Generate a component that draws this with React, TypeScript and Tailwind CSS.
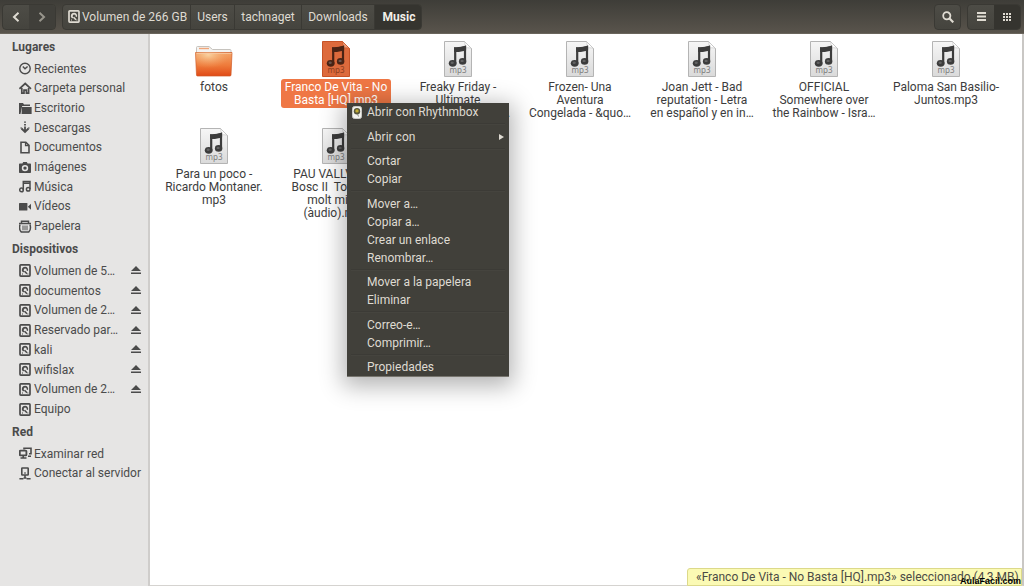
import { useState } from 'react'
import type { ReactNode } from 'react'
import clsx from 'clsx'

type IconName =
  | 'clock'
  | 'home'
  | 'folder'
  | 'download'
  | 'document'
  | 'camera'
  | 'music'
  | 'video'
  | 'trash'
  | 'disk'
  | 'network'
  | 'server'

interface Place {
  label: string
  icon: IconName
  eject?: boolean
}

interface FileItem {
  lines: string[]
  kind: 'folder' | 'mp3'
}

const glyphs: Record<IconName, ReactNode> = {
  clock: (
    <>
      <circle cx="6" cy="6.5" r="5.2" />
      <path d="M3.8 4.6 6 6.8l2.6-2.4" />
    </>
  ),
  home: (
    <>
      <path d="M.4 6.8 6.2 1.5l5.8 5.3" strokeWidth="1.7" />
      <path d="M2.8 6v5.2h2.2V8.2h2.4v3h2.2V6" strokeWidth="1.7" />
    </>
  ),
  folder: (
    <g fill="currentColor" stroke="none">
      <path d="M0 1h4l1 1.5h6V4H3.2L1.5 12H0z" />
      <path d="M3 5h9.6v7H2.6z" />
    </g>
  ),
  download: (
    <>
      <path d="M6 .4v1.400M6 3v1.400M6 5.500V11M2.500 7.500 6 11l3.500-3.500" strokeWidth="1.8" />
      <path d="M1.400 7h1.600M9 7h1.600" strokeWidth="1.2" />
    </>
  ),
  document: (
    <>
      <path d="M2 1.2h4.8L10 4.4v7.4H2z" strokeWidth="1.6" />
      <path d="M6.6 1v3.6H10" />
    </>
  ),
  camera: (
    <path
      fill="currentColor"
      stroke="none"
      fillRule="evenodd"
      d="M3.4 2.6 4.2 1h3.6l.8 1.6H11c.6 0 1 .4 1 1V11c0 .6-.4 1-1 1H1c-.6 0-1-.4-1-1V3.6c0-.6.4-1 1-1zM6 3.9a3.2 3.2 0 1 0 0 6.4 3.2 3.2 0 0 0 0-6.4zM6 5.4a1.7 1.7 0 1 1 0 3.4 1.7 1.7 0 0 1 0-3.4z"
    />
  ),
  music: (
    <>
      <path d="M4.3 10V1.5h6.7V9M4.3 3.2h6.7" strokeWidth="1.5" />
      <circle cx="2.5" cy="9.9" r="1.8" strokeWidth="1.5" />
      <circle cx="9.2" cy="9.2" r="1.8" strokeWidth="1.5" />
    </>
  ),
  video: (
    <g fill="currentColor" stroke="none">
      <rect x="0" y="3" width="8.4" height="7.5" rx=".6" />
      <path d="M8.8 6.7 12 3.7v6z" />
    </g>
  ),
  trash: (
    <>
      <path d="M0 3.4h12M2.5 3V1.2h7V3" strokeWidth="1.5" />
      <path d="M1 4.5c-.8 3-.3 6 1.200 7.400h7.600c1.500-1.400 2-4.400 1.200-7.400" strokeWidth="1.5" />
      <path d="M4 5.500v4.800M6 5.500v4.800M8 5.500v4.800" strokeWidth="1" />
    </>
  ),
  disk: (
    <>
      <rect x="1" y=".9" width="10" height="11.2" rx=".8" strokeWidth="1.7" />
      <path
        fill="currentColor"
        stroke="none"
        d="M6 2.7a3.2 3.2 0 0 1 3 4.2L7.6 6.6a1.5 1.5 0 1 0-2 .8L4 8.4A3.2 3.2 0 0 1 6 2.7z"
      />
      <path d="M5.5 7.2 8 9.8" strokeWidth="1.5" />
      <path d="M8.4 10h1M3 10h1" strokeWidth="1" />
    </>
  ),
  network: (
    <>
      <path d="M5 2.6V1.3h7v5.4h-2" strokeWidth="1.6" />
      <rect x=".8" y="3.6" width="6.6" height="4.8" rx=".6" strokeWidth="1.8" />
      <path d="M1.5 11h6M4.2 8.5V11M9 9.2h3" strokeWidth="1.6" />
    </>
  ),
  server: (
    <>
      <rect x="2.8" y="1" width="6.4" height="7" rx=".5" strokeWidth="1.6" />
      <path d="M6 8v3.5M.4 11.7h4M7.6 11.7h4M4.6 11h2.8" strokeWidth="1.6" />
      <path d="M5.3 6h1.4" />
    </>
  ),
}

function Glyph({ name }: { name: IconName }) {
  return (
    <svg
      viewBox="0 0 13 13"
      className="size-[13px] shrink-0"
      fill="none"
      stroke="currentColor"
      strokeWidth="1.4"
      aria-hidden="true"
    >
      {glyphs[name]}
    </svg>
  )
}

function EjectIcon() {
  return (
    <svg viewBox="0 0 10 9" className="h-[9px] w-[10px]" fill="currentColor" aria-hidden="true">
      <path d="M5 0l5 5H0zM0 6.5h10V8H0z" />
    </svg>
  )
}

function FolderIcon() {
  return (
    <svg viewBox="0 0 38 32" className="h-8 w-[38px]" aria-hidden="true">
      <defs>
        <linearGradient id="folderFront" x1="0" y1="0" x2="0" y2="1">
          <stop offset="0" stopColor="#f3a468" />
          <stop offset=".55" stopColor="#ee7a3a" />
          <stop offset="1" stopColor="#e04a17" />
        </linearGradient>
        <radialGradient id="folderShine" cx=".35" cy=".1" r=".6">
          <stop offset="0" stopColor="#fbe0b0" stopOpacity=".8" />
          <stop offset="1" stopColor="#f3a468" stopOpacity="0" />
        </radialGradient>
      </defs>
      <path d="M1.5 10V2.5c0-.6.4-1 1-1H14l3.5 3H35c.6 0 1 .4 1 1V10z" fill="#f4f3f1" stroke="#c6c3be" />
      <path d="M4 3.5h10" stroke="#f0a57a" strokeWidth="1.4" />
      <path d="M.5 7.5h36.5L36 30c0 .6-.4 1-1 1H2.5c-.6 0-1-.4-1-1z" fill="url(#folderFront)" stroke="#cf5a26" strokeOpacity=".7" />
      <path d="M.5 7.5h36.5L36 30H2z" fill="url(#folderShine)" />
      <path d="M1.5 8.5h35" stroke="#f8c9a2" strokeWidth=".8" />
    </svg>
  )
}

function Mp3Icon({ selected }: { selected: boolean }) {
  const ink = selected ? '#4a2314' : '#3c3c3c'
  return (
    <svg viewBox="0 0 28 36" className="h-9 w-7" aria-hidden="true">
      <defs>
        <linearGradient id="sheet" x1="0" y1="0" x2="0" y2="1">
          <stop offset="0" stopColor="#f6f6f6" />
          <stop offset="1" stopColor="#dadada" />
        </linearGradient>
      </defs>
      <path
        d="M.5.5h20l7 7v28H.5z"
        fill={selected ? '#dd6a3c' : 'url(#sheet)'}
        stroke={selected ? '#c65327' : '#b4b4b4'}
      />
      <path
        d="M20.5.5c1 3 .5 5-.5 7 2.5-1 5-1 7.5 0z"
        fill={selected ? '#f0a07c' : '#ffffff'}
        stroke={selected ? '#c65327' : '#bdbdbd'}
        strokeWidth=".6"
      />
      <path d="M11.2 22V7.5c4 .3 6.5-.3 9.8-1.5v14.5" fill="none" stroke={ink} strokeWidth="2.2" />
      <path d="M10.1 6.2c4 .4 8-.2 12-1.6v4.6c-4 1.5-8 2.1-12 1.7z" fill={ink} />
      <ellipse cx="8.7" cy="22.3" rx="3.9" ry="3.4" fill={ink} />
      <ellipse cx="18.6" cy="20.4" rx="3.7" ry="3.3" fill={ink} />
      <ellipse cx="8.2" cy="21.8" rx="1.6" ry="1.2" fill="#8a8a8a" fillOpacity=".5" />
      <ellipse cx="18.1" cy="19.9" rx="1.6" ry="1.2" fill="#8a8a8a" fillOpacity=".5" />
      <text
        x="14"
        y="32"
        textAnchor="middle"
        fontSize="8"
        fill={selected ? '#8c3d1e' : '#7c7c7c'}
        className="font-['Noto_Sans',sans-serif]"
      >
        mp3
      </text>
    </svg>
  )
}

function PlayerIcon() {
  return (
    <svg viewBox="0 0 10 13" className="h-[13px] w-[10px]" aria-hidden="true">
      <rect x=".5" y=".5" width="9" height="12" rx="2" fill="#f2f2ee" stroke="#c9c9c4" />
      <circle cx="5" cy="5.3" r="3.2" fill="#57563a" />
      <circle cx="5" cy="4.9" r="1.7" fill="#c2ac34" />
      <path d="M5.5 8l1 2.5" stroke="#8a8a80" />
    </svg>
  )
}

const sections: { title: string; places: Place[]; height: string }[] = [
  {
    title: 'Lugares',
    height: 'h-[177px]',
    places: [
      { label: 'Recientes', icon: 'clock' },
      { label: 'Carpeta personal', icon: 'home' },
      { label: 'Escritorio', icon: 'folder' },
      { label: 'Descargas', icon: 'download' },
      { label: 'Documentos', icon: 'document' },
      { label: 'Imágenes', icon: 'camera' },
      { label: 'Música', icon: 'music' },
      { label: 'Vídeos', icon: 'video' },
      { label: 'Papelera', icon: 'trash' },
    ],
  },
  {
    title: 'Dispositivos',
    height: 'h-[158px]',
    places: [
      { label: 'Volumen de 5…', icon: 'disk', eject: true },
      { label: 'documentos', icon: 'disk', eject: true },
      { label: 'Volumen de 2…', icon: 'disk', eject: true },
      { label: 'Reservado par…', icon: 'disk', eject: true },
      { label: 'kali', icon: 'disk', eject: true },
      { label: 'wifislax', icon: 'disk', eject: true },
      { label: 'Volumen de 2…', icon: 'disk', eject: true },
      { label: 'Equipo', icon: 'disk' },
    ],
  },
  {
    title: 'Red',
    height: 'h-[39px]',
    places: [
      { label: 'Examinar red', icon: 'network' },
      { label: 'Conectar al servidor', icon: 'server' },
    ],
  },
]

const files: FileItem[] = [
  { kind: 'folder', lines: ['fotos'] },
  { kind: 'mp3', lines: ['Franco De Vita - No', 'Basta [HQ].mp3'] },
  { kind: 'mp3', lines: ['Freaky Friday -', 'Ultimate', 'Freaky Friday Mov…'] },
  { kind: 'mp3', lines: ['Frozen- Una', 'Aventura', 'Congelada - &quo…'] },
  { kind: 'mp3', lines: ['Joan Jett - Bad', 'reputation - Letra', 'en español y en in…'] },
  { kind: 'mp3', lines: ['OFFICIAL', 'Somewhere over', 'the Rainbow - Isra…'] },
  { kind: 'mp3', lines: ['Paloma San Basilio-', 'Juntos.mp3'] },
  { kind: 'mp3', lines: ['Para un poco -', 'Ricardo Montaner.', 'mp3'] },
  { kind: 'mp3', lines: ['PAU VALLVÉ - El', 'Bosc II  Tot anirà', 'molt millor', '(àudio).mp3'] },
  { kind: 'mp3', lines: ['Ricardo', 'Montaner - 03.mp3'] },
]

const menuGroups = [
  ['Abrir con Rhythmbox'],
  ['Abrir con'],
  ['Cortar', 'Copiar'],
  ['Mover a…', 'Copiar a…', 'Crear un enlace', 'Renombrar…'],
  ['Mover a la papelera', 'Eliminar'],
  ['Correo-e…', 'Comprimir…'],
  ['Propiedades'],
]

const groupBox =
  'flex h-[26px] overflow-hidden rounded border border-[#3a3934] bg-linear-to-b from-[#4d4c46] to-[#45443e] text-[#dfdbd2]'

function HeaderBar() {
  return (
    <header className="flex h-[34px] shrink-0 items-center border-b border-[#6a655c] bg-linear-to-b from-[#3e3d38] to-[#59544c] pr-[3px] pl-[2px]">
      <div className={clsx(groupBox, 'w-[54px]')}>
        <button aria-label="Atrás" className="flex flex-1 items-center justify-center">
          <svg viewBox="0 0 8 10" className="h-[10px] w-2" fill="none" stroke="currentColor" strokeWidth="2">
            <path d="M6.5.8 2 5l4.5 4.2" />
          </svg>
        </button>
        <button
          aria-label="Adelante"
          className="flex flex-1 items-center justify-center bg-[#403f3a] text-[#98958c]"
        >
          <svg viewBox="0 0 8 10" className="h-[10px] w-2" fill="none" stroke="currentColor" strokeWidth="2">
            <path d="M1.5.8 6 5 1.5 9.2" />
          </svg>
        </button>
      </div>

      <nav className={clsx(groupBox, 'ml-[6px] divide-x divide-[#3a3934]')}>
        <button className="flex w-[128px] items-center gap-px pl-[5px] whitespace-nowrap">
          <Glyph name="disk" />
          Volumen de 266 GB
        </button>
        <button className="w-11">Users</button>
        <button className="w-[67px]">tachnaget</button>
        <button className="w-[73px]">Downloads</button>
        <button className="w-[46px] bg-[#35342f] pl-[2px] font-bold text-[#f2efe8]">Music</button>
      </nav>

      <button aria-label="Buscar" className={clsx(groupBox, 'ml-auto w-[27px] items-center justify-center')}>
        <svg viewBox="0 0 12 12" className="size-3" fill="none" stroke="currentColor">
          <circle cx="4.8" cy="4.8" r="3.6" strokeWidth="1.8" />
          <path d="m7.3 7.3 4 4" strokeWidth="2.2" />
        </svg>
      </button>
      <div className={clsx(groupBox, 'ml-[6px] w-[54px]')}>
        <button aria-label="Ver como lista" className="flex flex-1 items-center justify-center">
          <svg viewBox="0 0 9 9" className="size-[9px]" stroke="currentColor" strokeWidth="2">
            <path d="M0 1h9M0 4.5h9M0 8h9" />
          </svg>
        </button>
        <button
          aria-label="Ver como iconos"
          className="flex flex-1 items-center justify-center bg-[#35342f]"
        >
          <svg viewBox="0 0 8 8" className="size-2" fill="currentColor">
            {[0, 3, 6].map((y) => [0, 3, 6].map((x) => <rect key={`${x}-${y}`} x={x} y={y} width="2" height="2" />))}
          </svg>
        </button>
      </div>
    </header>
  )
}

function Sidebar() {
  return (
    <aside className="w-[150px] shrink-0 border-r-2 border-[#cfcdcb] bg-[#e6e5e4] text-[#4b4b4b]">
      {sections.map((section) => (
        <section key={section.title}>
          <h2 className="flex h-[25px] items-center pl-3 font-bold">{section.title}</h2>
          <ul className={clsx('grid auto-rows-fr', section.height)}>
            {section.places.map((place, i) => (
              <li key={i} className="flex min-h-0 items-center pr-[7px] pl-[19px]">
                <a href="#" className="flex items-center gap-[2px] whitespace-nowrap">
                  <Glyph name={place.icon} />
                  {place.label}
                </a>
                {place.eject && (
                  <button aria-label={`Expulsar ${place.label}`} className="ml-auto">
                    <EjectIcon />
                  </button>
                )}
              </li>
            ))}
          </ul>
        </section>
      ))}
    </aside>
  )
}

function ContextMenu() {
  return (
    <div
      role="menu"
      className="absolute top-[103px] left-[347px] flex h-[274px] w-[162px] flex-col justify-between border-b border-[#77756e] bg-[#41403a] text-[#dfdbd2] shadow-[0_5px_22px_4px_rgba(0,0,0,0.3)]"
    >
      {menuGroups.map((group, i) => [
        i > 0 && <hr key={`sep-${i}`} className="mx-1 h-[2px] border-t border-b border-t-[#3c3b36] border-b-[#45443e]" />,
        <div key={i}>
          {group.map((label) => (
            <button
              key={label}
              role="menuitem"
              className="flex h-[18px] w-full items-center pr-[5px] pl-[5px] text-left"
            >
              <span className="w-[15px]">{label === 'Abrir con Rhythmbox' && <PlayerIcon />}</span>
              {label}
              {label === 'Abrir con' && (
                <svg viewBox="0 0 5 6" className="ml-auto h-[6px] w-[5px]" fill="currentColor">
                  <path d="M0 0l5 3-5 3z" />
                </svg>
              )}
            </button>
          ))}
        </div>,
      ])}
    </div>
  )
}

export default function App() {
  const [selected, setSelected] = useState(1)

  return (
    <div className="relative flex min-h-screen flex-col overflow-hidden bg-white font-['Roboto','Noto_Sans',sans-serif] text-[12px] leading-[16px]">
      <HeaderBar />
      <div className="flex flex-1">
        <Sidebar />
        <main className="flex-1 border-r-2 border-b border-r-[#c9c7c4] border-b-[#d5d3d0] pt-[7px] pl-[3px] text-[#3c3c3c]">
          <div className="grid auto-rows-[87px] grid-cols-[repeat(auto-fill,122px)]">
            {files.map((file, i) => (
              <button key={i} onClick={() => setSelected(i)} className="flex flex-col items-center">
                <span className="flex h-9 shrink-0 items-end">
                  {file.kind === 'folder' ? <FolderIcon /> : <Mp3Icon selected={i === selected} />}
                </span>
                <span
                  className={clsx(
                    'mt-[2px] rounded-[3px] px-1 pt-[2px] pb-px leading-[13px] whitespace-pre',
                    i === selected && 'bg-[#ef7745] text-white',
                  )}
                >
                  {file.lines.join('\n')}
                </span>
              </button>
            ))}
          </div>
        </main>
      </div>

      <div
        role="status"
        className="absolute right-[2px] bottom-0 flex h-[18px] w-[335px] items-center rounded-tl-[3px] border border-[#dcd98a] bg-[#fbfab4] pl-2 whitespace-pre text-[#4b4b45]"
      >
        «Franco De Vita - No Basta [HQ].mp3» seleccionado (4,3 MB)
      </div>
      <span className="absolute right-[3px] bottom-0 font-['Liberation_Sans',sans-serif] text-[9px] leading-[10px] font-bold text-black">
        AulaFacil.com
      </span>

      <ContextMenu />
    </div>
  )
}
